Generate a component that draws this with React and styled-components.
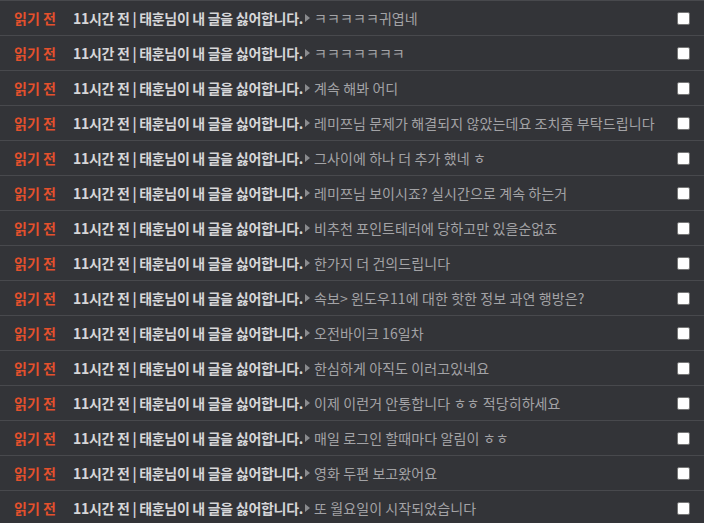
import React from "react";
import styled, { createGlobalStyle } from "styled-components";

const Global = createGlobalStyle`
  html, body { margin: 0; padding: 0; background: #333438; }
  body { font-family: "Noto Sans CJK KR", "Noto Sans", sans-serif; overflow: hidden; }
`;

const List = styled.ul`
  list-style: none;
  margin: 0;
  padding: 0;
  width: 704px;
  background: #333438;
`;

const Row = styled.li`
  display: flex;
  align-items: center;
  height: 34px;
  border-top: 1px solid #48494d;
  padding: 0 14px 0 14px;
  font-size: 14px;
  line-height: 1;
  white-space: nowrap;
`;

const Status = styled.span`
  color: #e5502c;
  font-weight: 700;
  width: 59px;
  flex: none;
`;

const Title = styled.span`
  color: #d6d6d8;
  font-weight: 700;
  letter-spacing: -0.3px;
`;

const Arrow = styled.span`
  display: inline-block;
  flex: none;
  width: 0;
  height: 0;
  border-top: 4px solid transparent;
  border-bottom: 4px solid transparent;
  border-left: 5px solid #8a8b8e;
  margin: 0 4px 0 2px;
`;

const Message = styled.span`
  color: #a3a3a6;
  flex: 1;
  letter-spacing: 0.1px;
`;

const Check = styled.input`
  appearance: none;
  width: 13px;
  height: 13px;
  margin: 0;
  flex: none;
  background: #fff;
  border: 1px solid #767676;
  border-radius: 2px;
`;

const messages = [
  "ㅋㅋㅋㅋㅋ귀엽네",
  "ㅋㅋㅋㅋㅋㅋㅋ",
  "계속 해봐 어디",
  "레미쯔님 문제가 해결되지 않았는데요 조치좀 부탁드립니다",
  "그사이에 하나 더 추가 했네 ㅎ",
  "레미쯔님 보이시죠? 실시간으로 계속 하는거",
  "비추천 포인트테러에 당하고만 있을순없죠",
  "한가지 더 건의드립니다",
  "속보> 윈도우11에 대한 핫한 정보 과연 행방은?",
  "오전바이크 16일차",
  "한심하게 아직도 이러고있네요",
  "이제 이런거 안통합니다 ㅎㅎ 적당히하세요",
  "매일 로그인 할때마다 알림이 ㅎㅎ",
  "영화 두편 보고왔어요",
  "또 월요일이 시작되었습니다",
];

export default function App() {
  return (
    <>
      <Global />
      <List>
        {messages.map((m, i) => (
          <Row key={i}>
            <Status>읽기 전</Status>
            <Title>11시간 전 | 태훈님이 내 글을 싫어합니다.</Title>
            <Arrow />
            <Message>{m}</Message>
            <Check type="checkbox" aria-label="선택" />
          </Row>
        ))}
      </List>
    </>
  );
}
